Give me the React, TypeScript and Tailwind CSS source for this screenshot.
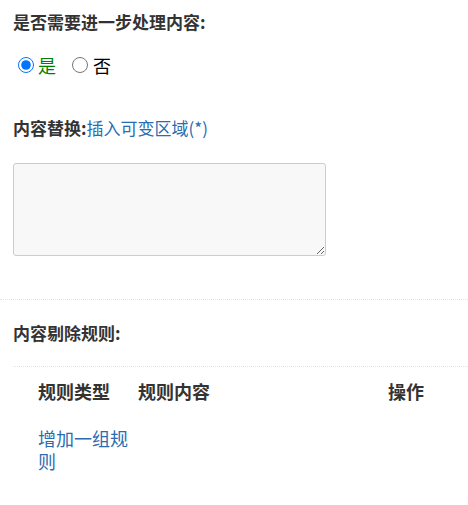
import React from "react";

const font = { fontFamily: '"Noto Sans CJK SC", "Liberation Sans", sans-serif' };

export default function App() {
  return (
    <div className="w-[468px] h-[505px] bg-white text-[#333] overflow-hidden" style={font}>
      <div className="px-[13px] pt-[10px]">
        <div className="text-[17px] font-bold leading-[24px]">是否需要进一步处理内容:</div>
        <div className="mt-[19px] flex items-center h-[24px] text-[18px]">
          <label className="flex items-center">
            <input type="radio" name="need" defaultChecked className="m-0 ml-[5px] w-[16px] h-[16px]" />
            <span className="ml-[4px] text-[#008000]">是</span>
          </label>
          <label className="flex items-center ml-[16px]">
            <input type="radio" name="need" className="m-0 w-[16px] h-[16px]" />
            <span className="ml-[5px] text-black">否</span>
          </label>
        </div>
        <div className="mt-[39px] leading-[24px] text-[17px]">
          <span className="font-bold">内容替换:</span>
          <a className="text-[#2b6cb0] cursor-pointer">插入可变区域(*)</a>
        </div>
        <textarea className="mt-[23px] block w-[313px] h-[93px] bg-[#f8f8f8] border border-[#ccc] rounded-[3px] resize" />
      </div>
      <div className="mt-[43px] border-t border-dotted border-[#d6e6f2]" />
      <div className="pl-[13px]">
        <div className="pt-[21px] text-[17px] font-bold leading-[24px]">内容剔除规则:</div>
        <div className="mt-[21px] border-t border-dotted border-[#d6e6f2]" />
        <table className="w-full border-collapse text-[18px]">
          <thead>
            <tr>
              <th className="w-[125px] pl-[25px] pr-[10px] pt-[12px] pb-[24px] text-left font-bold leading-[24px]">规则类型</th>
              <th className="pt-[12px] pb-[24px] text-left font-bold leading-[24px]">规则内容</th>
              <th className="w-[80px] pt-[12px] pb-[24px] text-left font-bold leading-[24px]">操作</th>
            </tr>
          </thead>
          <tbody>
            <tr>
              <td className="pl-[25px] pr-[10px] align-top leading-[23px]">
                <a className="text-[#2b6cb0] cursor-pointer">增加一组规则</a>
              </td>
              <td />
              <td />
            </tr>
          </tbody>
        </table>
      </div>
    </div>
  );
}
